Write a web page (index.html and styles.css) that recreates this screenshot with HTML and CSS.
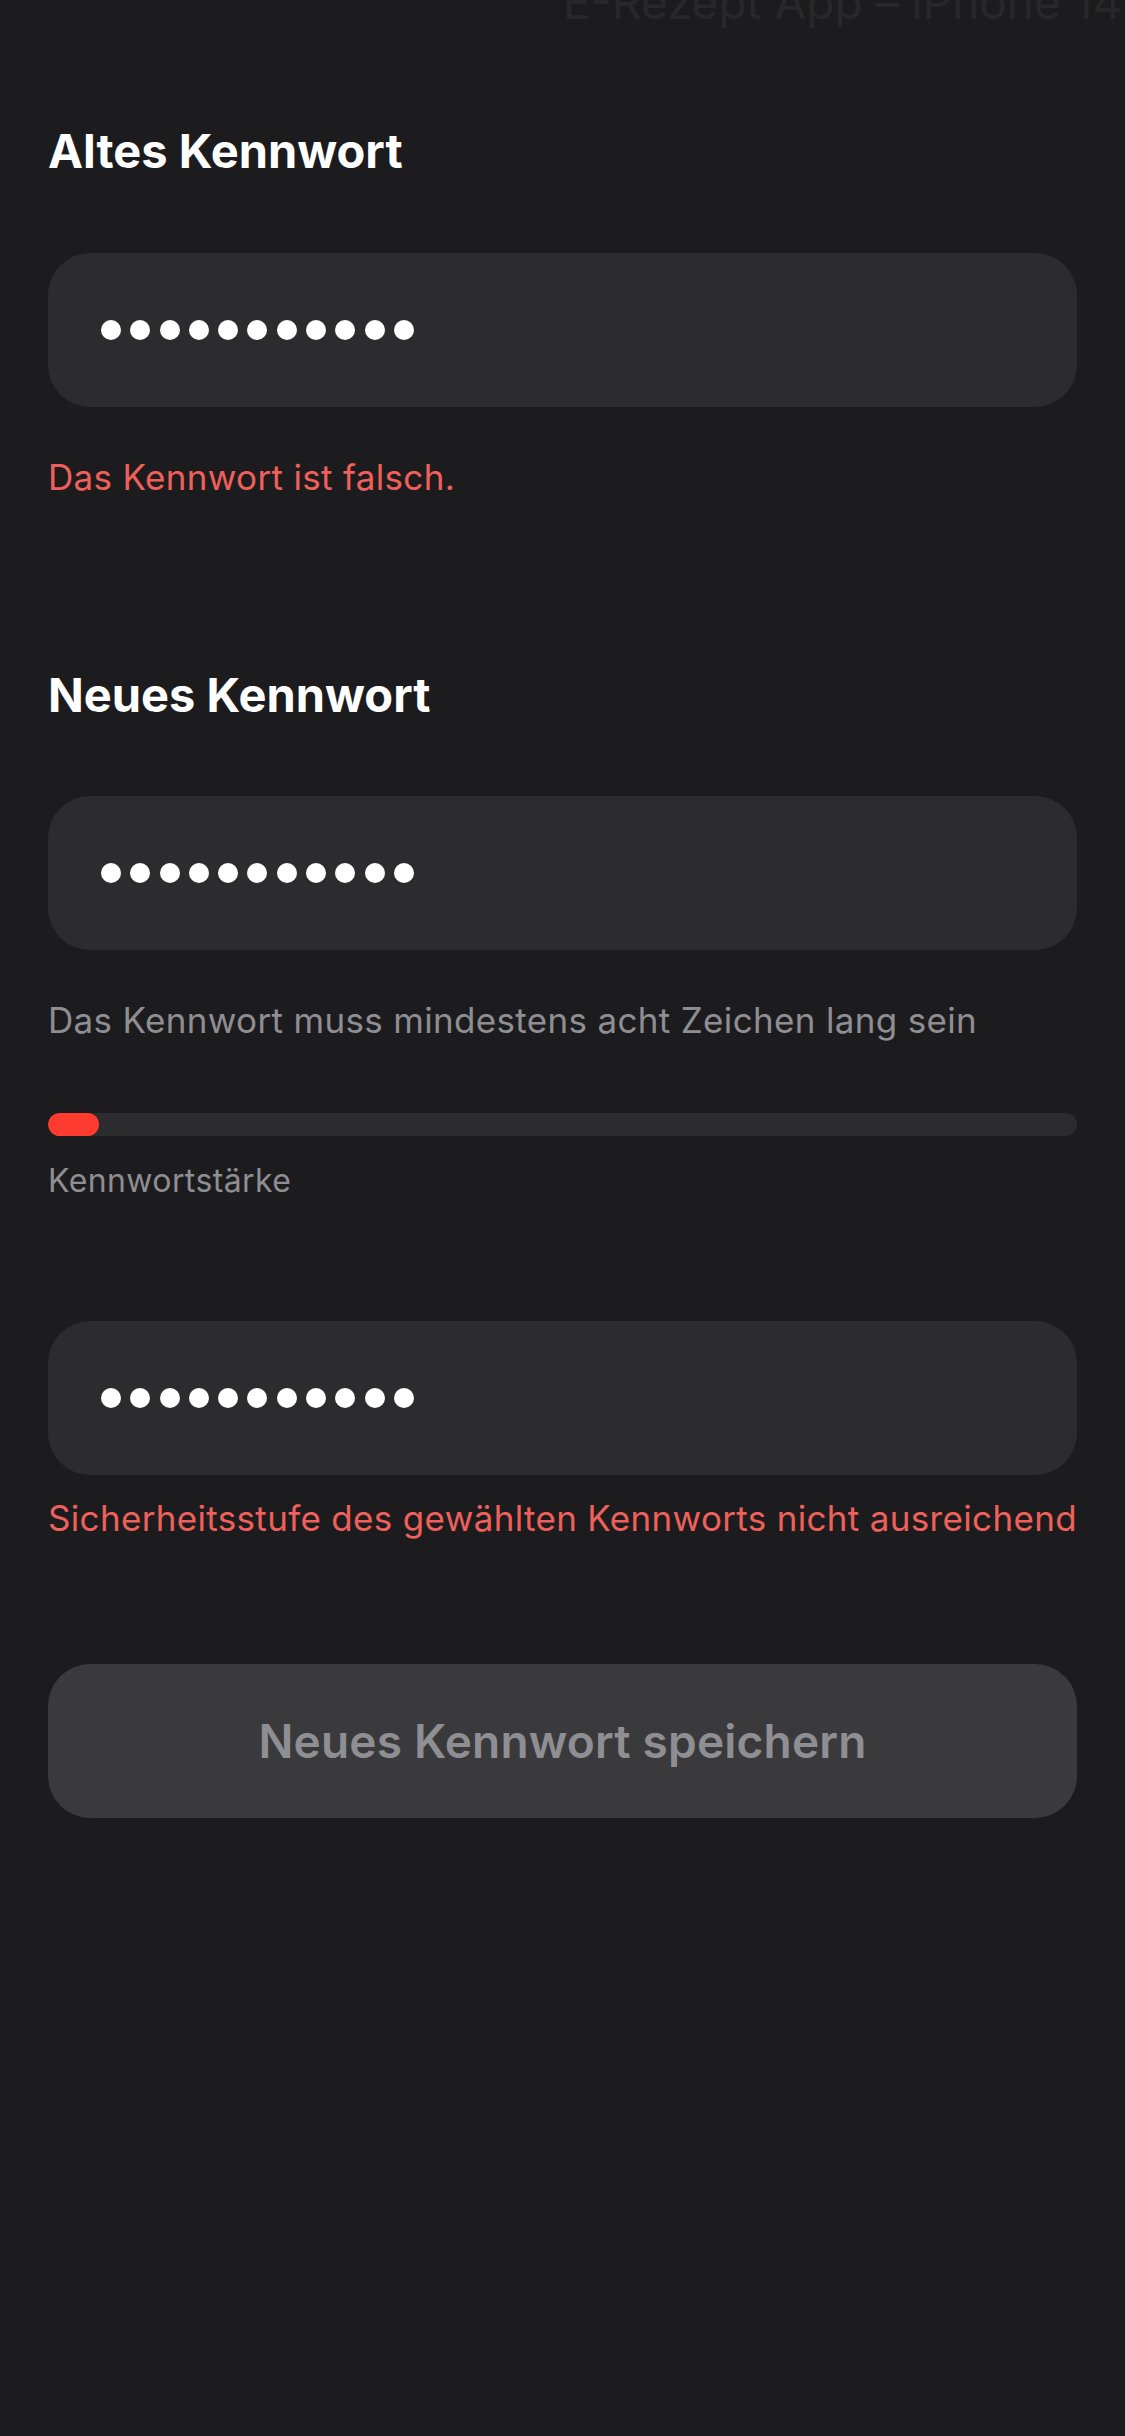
FILE: index.html
```html
<!DOCTYPE html>
<html lang="de">
<head>
<meta charset="utf-8">
<title>Kennwort ändern</title>
<link rel="stylesheet" href="styles.css">
</head>
<body>
<div class="screen">
  <div class="watermark">E-Rezept App – iPhone 14</div>

  <h2 class="heading heading-first">Altes Kennwort</h2>
  <div class="field">
    <div class="dots"><span></span><span></span><span></span><span></span><span></span><span></span><span></span><span></span><span></span><span></span><span></span></div>
  </div>
  <p class="error error-first">Das Kennwort ist falsch.</p>

  <h2 class="heading heading-second">Neues Kennwort</h2>
  <div class="field field-second">
    <div class="dots"><span></span><span></span><span></span><span></span><span></span><span></span><span></span><span></span><span></span><span></span><span></span></div>
  </div>
  <p class="hint">Das Kennwort muss mindestens acht Zeichen lang sein</p>

  <div class="strength"><div class="strength-fill" style="width:51px"></div></div>
  <p class="strength-label">Kennwortstärke</p>

  <div class="field field-third">
    <div class="dots"><span></span><span></span><span></span><span></span><span></span><span></span><span></span><span></span><span></span><span></span><span></span></div>
  </div>
  <p class="error error-second">Sicherheitsstufe des gewählten Kennworts nicht ausreichend</p>

  <button class="save" disabled>Neues Kennwort speichern</button>
</div>
</body>
</html>
```

FILE: styles.css
```css
html, body {
  margin: 0;
  padding: 0;
  background: #1c1c1e;
  height: 100%;
}

body {
  overflow: hidden;
  font-family: Inter, "Noto Sans", "Liberation Sans", sans-serif;
  -webkit-font-smoothing: antialiased;
}

.screen {
  display: flex;
  flex-direction: column;
  padding: 0 48px;
}

.watermark {
  margin: -26px 0 0 515px;
  height: 56px;
  line-height: 56px;
  font-size: 46px;
  font-weight: 400;
  color: #28282a;
  white-space: nowrap;
}

.heading {
  margin: 0;
  font-size: 47px;
  line-height: 56px;
  font-weight: 700;
  color: #ffffff;
}

.heading-first {
  margin-top: 93px;
}

.heading-second {
  margin-top: 169px;
}

.field {
  margin-top: 74px;
  height: 154px;
  border-radius: 42px;
  background: #2c2c2e;
  display: flex;
  align-items: center;
  padding-left: 53px;
}

.field-second {
  margin-top: 73px;
}

.field-third {
  margin-top: 121px;
}

.dots {
  display: flex;
  gap: 9.3px;
}

.dots span {
  width: 20px;
  height: 20px;
  border-radius: 50%;
  background: #ffffff;
}

.error,
.hint {
  margin: 49px 0 0;
  font-size: 35px;
  line-height: 42px;
  font-weight: 400;
  letter-spacing: 0.33px;
  white-space: nowrap;
}

.error {
  color: #ef605b;
}

.error-second {
  margin-top: 22px;
}

.hint {
  color: #8e8e93;
}

.strength {
  margin-top: 72px;
  height: 23px;
  border-radius: 12px;
  background: #2c2c2e;
  overflow: hidden;
}

.strength-fill {
  height: 100%;
  border-radius: 12px;
  background: #ff3b30;
}

.strength-label {
  margin: 26px 0 0;
  font-size: 32px;
  line-height: 38px;
  letter-spacing: 0.4px;
  color: #8e8e93;
}

.save {
  margin-top: 125px;
  height: 154px;
  border: 0;
  border-radius: 42px;
  background: #3a3a3c;
  color: #8e8e93;
  font-family: inherit;
  font-size: 46px;
  font-weight: 600;
  line-height: 154px;
  padding: 0;
  letter-spacing: 0.2px;
}
```
